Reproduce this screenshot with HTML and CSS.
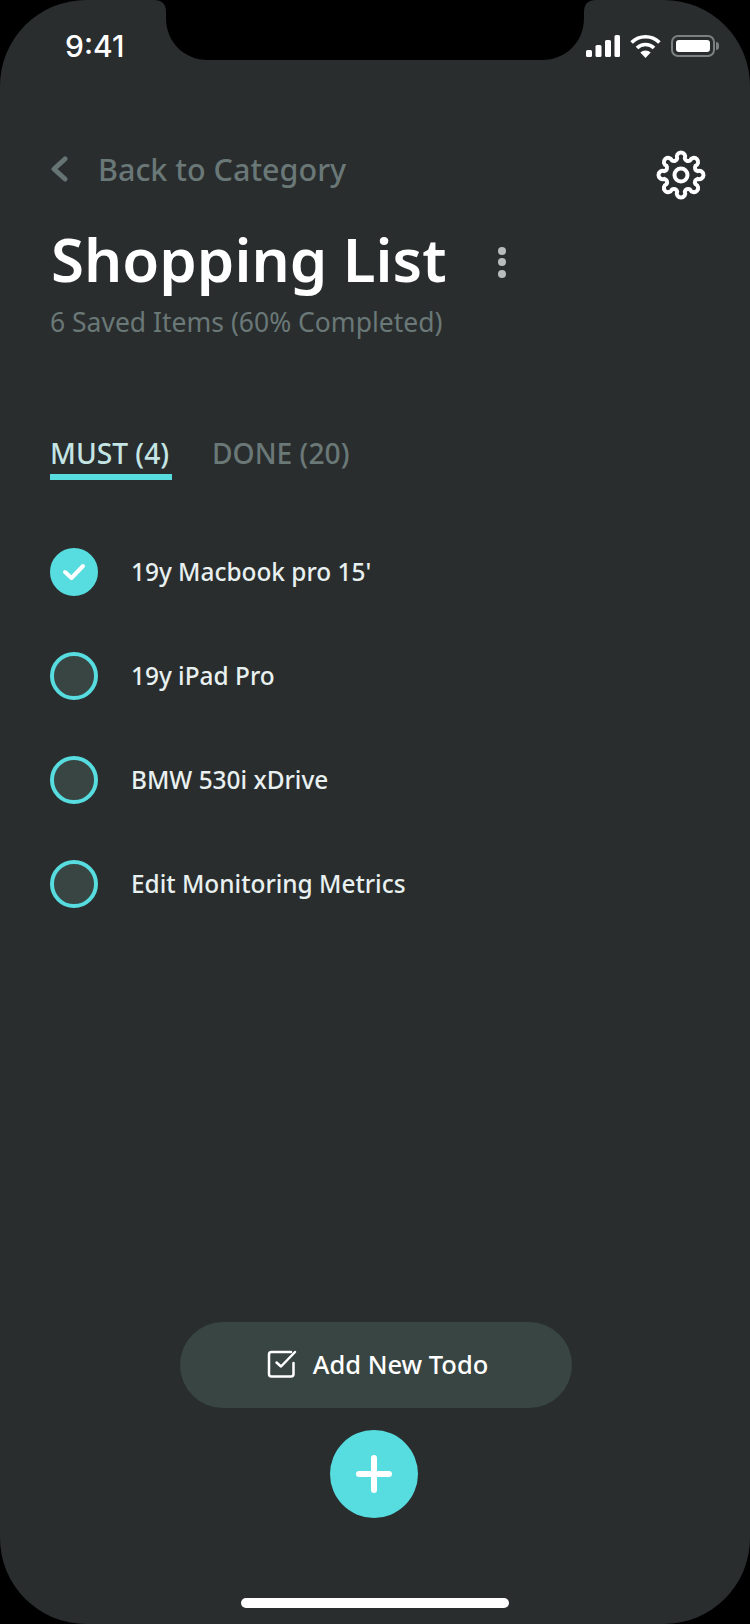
FILE: index.html
```html
<!DOCTYPE html>
<html lang="en">
<head>
<meta charset="UTF-8" />
<title>Shopping List</title>
<link rel="stylesheet" href="styles.css">
</head>
<body>

<div class="screen">
  <svg class="notch" width="450" height="60" viewBox="150 0 450 60">
    <path d="M154 0Q166 0 166 12V18C166 42 184 60 208 60H542C566 60 584 42 584 18V12Q584 0 596 0Z" fill="#000"/>
  </svg>

  <div class="status">
    <span class="time">9:41</span>
    <div class="status-icons">
      <svg width="34" height="22" viewBox="0 0 34 22" fill="#fff">
        <rect x="0" y="15" width="6" height="7" rx="1.5"/>
        <rect x="9.5" y="10" width="6" height="12" rx="1.5"/>
        <rect x="19" y="5" width="6" height="17" rx="1.5"/>
        <rect x="28.5" y="0" width="5.5" height="22" rx="1.5"/>
      </svg>
      <svg width="31" height="23" viewBox="0 0 31 23" fill="none" stroke="#fff" stroke-width="3.6">
        <path d="M1.6 7.6A19.6 19.6 0 0 1 29.4 7.6"/>
        <path d="M7 13A12 12 0 0 1 24 13"/>
        <path d="M15.5 23L10.3 17.6A7.4 7.4 0 0 1 20.7 17.6Z" fill="#fff" stroke="none"/>
      </svg>
      <div class="battery"><div class="battery-level"></div></div>
    </div>
  </div>

  <div class="top-row">
    <div class="back">
      <svg width="18" height="26" viewBox="0 0 18 26" fill="none" stroke="#667473" stroke-width="5" stroke-linecap="round" stroke-linejoin="round">
        <path d="M15 3L4 13L15 23"/>
      </svg>
      <span>Back to Category</span>
    </div>
    <svg class="gear" width="50" height="50" viewBox="0 0 50 50" fill="none" stroke="#fff" stroke-width="4" stroke-linejoin="round">
      <path d="M21.18 8.44A4.2 4.2 0 1 1 28.82 8.44A3.5 3.5 0 0 0 34.01 10.58A4.2 4.2 0 1 1 39.42 15.99A3.5 3.5 0 0 0 41.56 21.18A4.2 4.2 0 1 1 41.56 28.82A3.5 3.5 0 0 0 39.42 34.01A4.2 4.2 0 1 1 34.01 39.42A3.5 3.5 0 0 0 28.82 41.56A4.2 4.2 0 1 1 21.18 41.56A3.5 3.5 0 0 0 15.99 39.42A4.2 4.2 0 1 1 10.58 34.01A3.5 3.5 0 0 0 8.44 28.82A4.2 4.2 0 1 1 8.44 21.18A3.5 3.5 0 0 0 10.58 15.99A4.2 4.2 0 1 1 15.99 10.58A3.5 3.5 0 0 0 21.18 8.44Z"/>
      <circle cx="25" cy="25" r="6.5"/>
    </svg>
  </div>

  <div class="title-row">
    <h1>Shopping List</h1>
    <div class="dots"><i></i><i></i><i></i></div>
  </div>
  <p class="subtitle">6 Saved Items (60% Completed)</p>

  <div class="tabs">
    <div class="tab active">MUST (4)</div>
    <div class="tab">DONE (20)</div>
  </div>

  <ul class="todos">
    <li>
      <span class="circle checked">
        <svg width="24" height="20" viewBox="0 0 24 20" fill="none" stroke="#fff" stroke-width="4" stroke-linecap="round" stroke-linejoin="round">
          <path d="M3 10L9.500 16L21 4"/>
        </svg>
      </span>
      19y Macbook pro 15'
    </li>
    <li><span class="circle"></span>19y iPad Pro</li>
    <li><span class="circle"></span>BMW 530i xDrive</li>
    <li><span class="circle"></span>Edit Monitoring Metrics</li>
  </ul>

  <div class="actions">
    <div class="add-btn">
      <svg width="30" height="28" viewBox="0 0 30 28" fill="none" stroke="#fff" stroke-width="2.500" stroke-linecap="round" stroke-linejoin="round">
        <path d="M24 2H4.500A2.500 2.500 0 0 0 2 4.500V24A2.500 2.500 0 0 0 4.500 26.500H24A2.500 2.500 0 0 0 26.500 24V13"/>
        <path d="M9.500 12.500L14 16.500L28 2"/>
      </svg>
      <span>Add New Todo</span>
    </div>
    <div class="fab">
      <svg width="36" height="38" viewBox="0 0 36 38" stroke="#fff" stroke-width="6" stroke-linecap="round">
        <path d="M18 3V35M3 19H33"/>
      </svg>
    </div>
  </div>

  <div class="home-bar"></div>
</div>

</body>
</html>
```

FILE: styles.css
```css
* { box-sizing: border-box; }
html, body { margin: 0; padding: 0; background: #000; }
body { width: 750px; height: 1624px; overflow: hidden; font-family: "Noto Sans", sans-serif; }

.screen {
  position: relative;
  display: flex;
  flex-direction: column;
  width: 750px;
  height: 1624px;
  padding: 0 44px 0 50px;
  background: #292d2e;
  border-radius: 86px;
  overflow: hidden;
}
.notch { position: absolute; top: 0; left: 150px; }

.status { display: flex; justify-content: space-between; align-items: center; height: 22px; margin-top: 35px; padding: 0 0 0 15px; margin-right: -9px; }
.time { font-family: Inter, sans-serif; font-size: 30px; font-weight: 500; color: #fff; }
.status-icons { display: flex; align-items: center; gap: 10px; }
.battery { position: relative; width: 44px; height: 22px; padding: 3px; border: 2px solid #7c8080; border-radius: 7px; }
.battery-level { height: 100%; background: #fff; border-radius: 3px; }
.battery::after { content: ""; position: absolute; right: -6px; top: 5px; width: 3px; height: 8px; background: #7c8080; border-radius: 0 3px 3px 0; }

.top-row { display: flex; justify-content: space-between; align-items: flex-start; margin-top: 93px; }
.back { display: flex; align-items: center; gap: 30px; margin-top: -1px; color: #6a7877; font-size: 30.500px; font-weight: 500; line-height: 40px; }
.gear { display: block; }

.title-row { display: flex; align-items: center; gap: 51px; margin-top: 21px; padding-left: 1px; }
h1 { margin: 0; font-size: 60px; font-weight: 600; line-height: 76px; color: #fff; }
.dots { display: flex; flex-direction: column; gap: 3.500px; margin-top: 6px; }
.dots i { display: block; width: 8px; height: 8px; border-radius: 50%; background: #b8bcbc; }

.subtitle { margin: 7px 0 0; font-size: 26.500px; line-height: 36px; color: #6a7877; }

.tabs { display: flex; gap: 40px; margin-top: 91px; }
.tab { height: 49px; font-size: 28.200px; font-weight: 500; line-height: 44px; color: #6a7877; }
.tab.active { width: 122px; color: #c5e5e5; border-bottom: 6px solid #57dcdf; }

.todos { list-style: none; margin: 40px 0 0; padding: 0; }
.todos li { display: flex; align-items: center; gap: 33px; height: 104px; padding-bottom: 2px; font-size: 24.400px; font-weight: 500; color: #e8f0f0; }
.circle { display: flex; align-items: center; justify-content: center; flex: none; width: 48px; height: 48px; margin-top: 2px; border: 4px solid #57dcdf; border-radius: 50%; background: #384543; }
.circle.checked { background: #57dcdf; }

.actions { display: flex; flex-direction: column; align-items: center; gap: 22px; margin-top: auto; margin-right: 6px; }
.add-btn { display: flex; align-items: center; justify-content: center; gap: 16px; width: 392px; height: 86px; padding: 0 0 2px 3px; margin-left: 2px; background: #384543; border-radius: 43px; color: #fff; font-size: 25.500px; font-weight: 500; }
.fab { display: flex; align-items: center; justify-content: center; width: 88px; height: 88px; margin-right: 2px; background: #57dcdf; border-radius: 50%; }

.home-bar { align-self: center; width: 268px; height: 10px; margin: 80px 6px 16px 0; background: #fff; border-radius: 5px; }
```
